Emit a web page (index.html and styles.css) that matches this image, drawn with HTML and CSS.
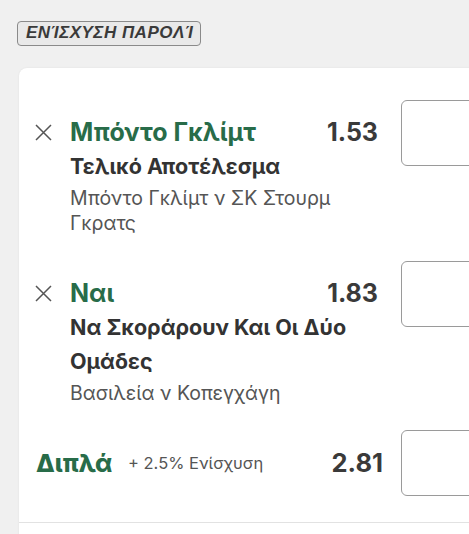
FILE: index.html
```html
<!DOCTYPE html>
<html lang="el">
<head>
<meta charset="utf-8">
<link rel="stylesheet" href="styles.css">
</head>
<body>
<div class="page">
  <div class="badge">ΕΝΊΣΧΥΣΗ ΠΑΡΟΛΊ</div>
  <div class="card">
    <div class="sel">
      <span class="x"><svg width="17" height="17" viewBox="0 0 17 17"><path d="M1 1L16 16M16 1L1 16" stroke="#555" stroke-width="1.5" fill="none"/></svg></span>
      <div class="name">Μπόντο Γκλίμτ</div>
      <div class="odds">1.53</div>
      <div class="stake"></div>
      <div class="market">Τελικό Αποτέλεσμα</div>
      <div class="event">Μπόντο Γκλίμτ ν ΣΚ Στουρμ Γκρατς</div>
    </div>
    <div class="sel">
      <span class="x"><svg width="17" height="17" viewBox="0 0 17 17"><path d="M1 1L16 16M16 1L1 16" stroke="#555" stroke-width="1.5" fill="none"/></svg></span>
      <div class="name">Ναι</div>
      <div class="odds">1.83</div>
      <div class="stake"></div>
      <div class="market">Να Σκοράρουν Και Οι Δύο Ομάδες</div>
      <div class="event">Βασιλεία ν Κοπεγχάγη</div>
    </div>
    <div class="double">
      <div class="dname">Διπλά</div>
      <div class="boost">+ 2.5% Ενίσχυση</div>
      <div class="dodds">2.81</div>
      <div class="stake"></div>
    </div>
    <div class="divider"></div>
  </div>
</div>
</body>
</html>
```

FILE: styles.css
```css
html, body {
  margin: 0;
  padding: 0;
  background: #f0f0f0;
  overflow: hidden;
  width: 469px;
  height: 534px;
}
.page {
  padding: 21px 0 0 17px;
  font-family: Inter, "Noto Sans", sans-serif;
}
.badge {
  display: inline-block;
  box-sizing: border-box;
  height: 25px;
  padding: 0 7px 0 8px;
  border: 1.5px solid #8a8a8a;
  border-radius: 4px;
  background: #e9e9e9;
  color: #3a3a3a;
  font-family: "Liberation Sans", Arial, sans-serif;
  font-weight: bold;
  font-style: italic;
  font-size: 17px;
  line-height: 22px;
  letter-spacing: 0.5px;
}
.card {
  margin: 22px 0 0 2px;
  width: 482px;
  background: #fff;
  border-top-left-radius: 8px;
  box-shadow: 0 0 2px rgba(0,0,0,0.08);
  padding-top: 48px;
  padding-bottom: 40px;
}
.sel {
  display: grid;
  grid-template-columns: 35px 1fr auto 100px;
  padding-left: 16px;
  margin-bottom: 41px;
}
.x {
  grid-column: 1;
  grid-row: 1;
  display: flex;
  align-items: center;
  height: 33px;
}
.x svg { display: block; }
.name {
  grid-column: 2;
  grid-row: 1;
  color: #286c49;
  font-weight: 700;
  font-size: 25px;
  line-height: 33px;
}
.odds {
  grid-column: 3;
  grid-row: 1;
  color: #3a3a3a;
  font-weight: 700;
  font-size: 25px;
  line-height: 33px;
  margin-right: 23px;
}
.stake {
  grid-column: 4;
  grid-row: 1 / span 3;
  align-self: start;
  box-sizing: border-box;
  height: 66px;
  margin-top: -16px;
  border: 1.5px solid #9a9a9a;
  border-radius: 6px;
  background: #fff;
}
.market {
  grid-column: 2 / 4;
  grid-row: 2;
  color: #333;
  font-weight: 700;
  font-size: 21.5px;
  line-height: 34.5px;
}
.event {
  grid-column: 2 / 4;
  grid-row: 3;
  color: #555;
  font-size: 19.5px;
  line-height: 25px;
  margin-top: 2px;
  padding-right: 30px;
}
.double {
  display: flex;
  align-items: center;
  padding-left: 17px;
  height: 66px;
  margin-top: -17px;
}
.double .stake {
  width: 100px;
  flex: none;
  margin-top: 0;
}
.dname {
  color: #286c49;
  font-weight: 800;
  font-size: 24.5px;
  width: 92px;
}
.boost {
  color: #555;
  font-size: 16.5px;
  flex: 1;
}
.dodds {
  color: #3a3a3a;
  font-weight: 700;
  font-size: 25.5px;
  margin-right: 18px;
}
.divider {
  margin-top: 26px;
  height: 1.5px;
  background: #e2e2e2;
}
```
